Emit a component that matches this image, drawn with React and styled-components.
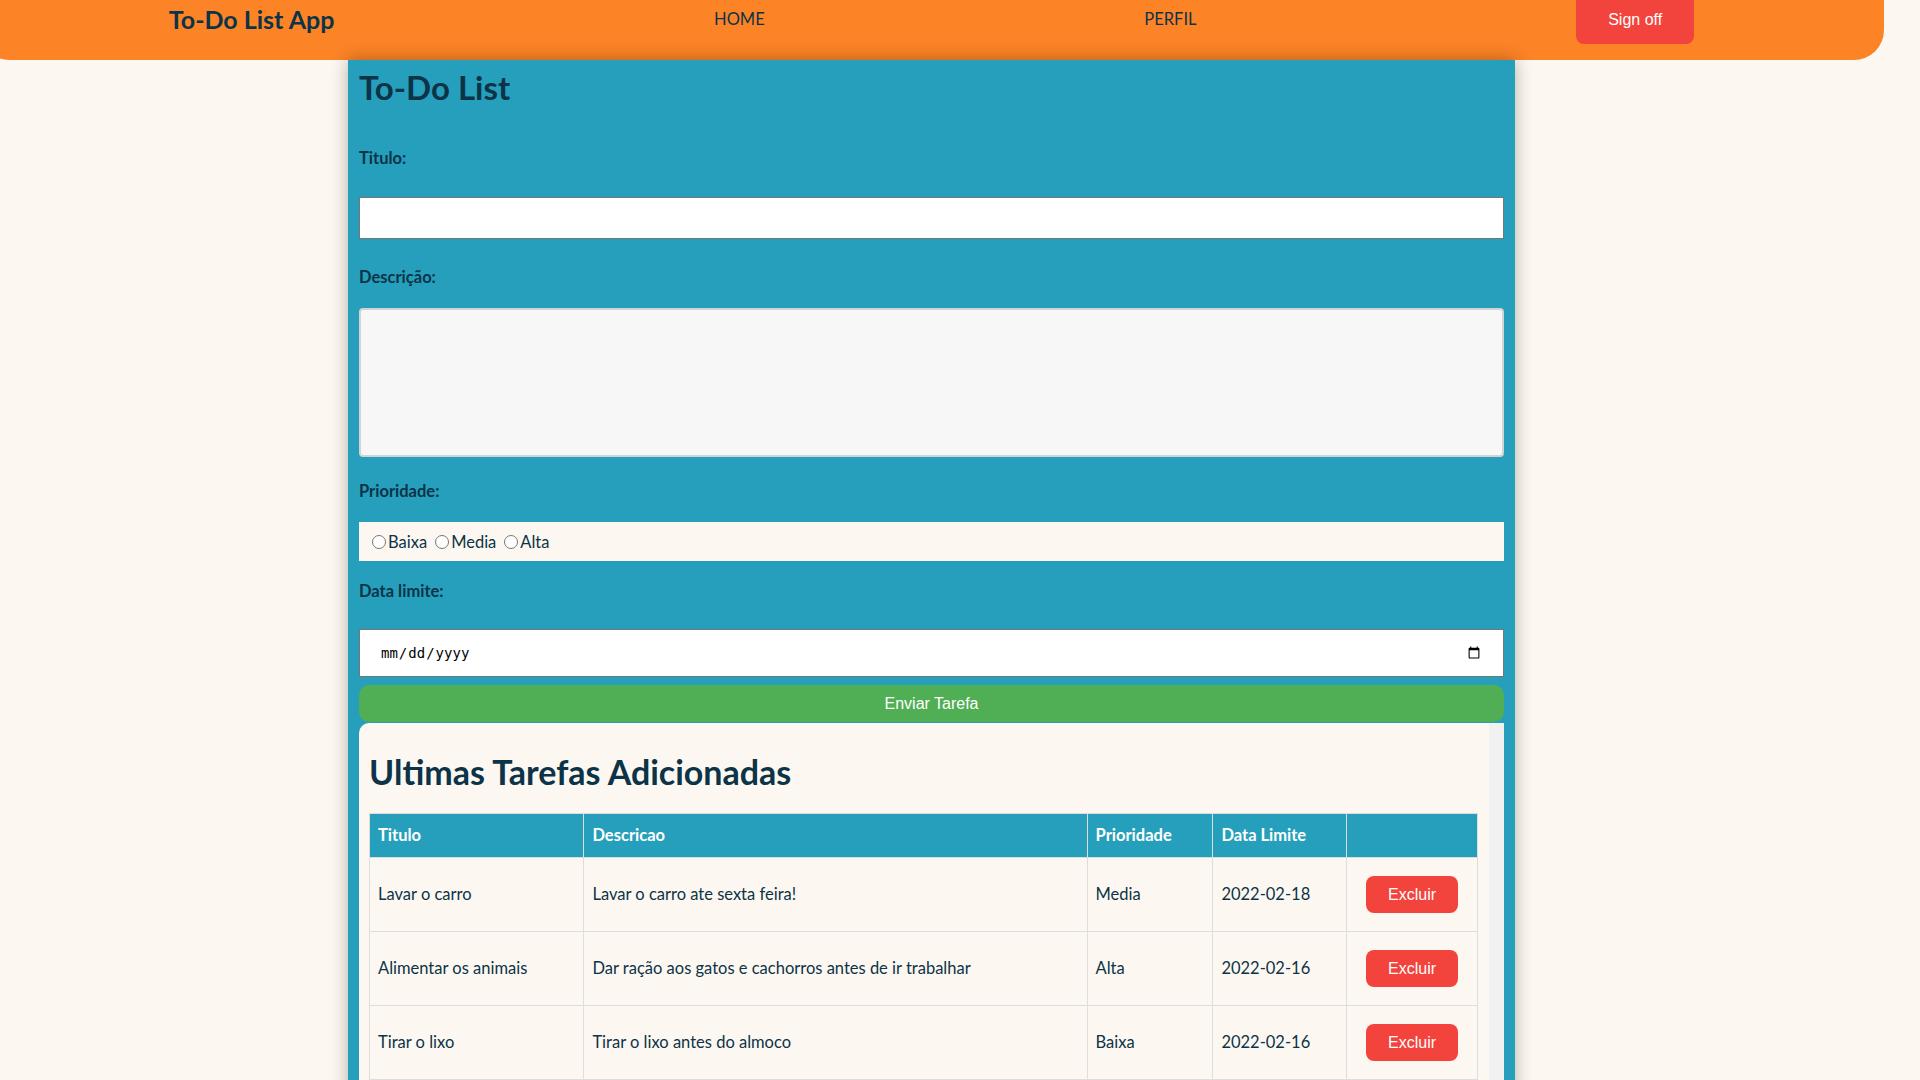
import React, { useLayoutEffect } from 'react';
import styled, { createGlobalStyle } from 'styled-components';

const GlobalStyle = createGlobalStyle`
    html,
    body {
        margin: 0;
        padding: 0;
    }

    body {
        background-color: #fcf8f1;
        font-family: Lato, 'Noto Sans', sans-serif;
        color: #0c3347;
    }

    * {
        box-sizing: border-box;
    }
`;

const Page = styled.div`
    box-sizing: content-box;
    width: 1905px;
    margin-left: -21px;
    padding-right: 44px;
`;

const Header = styled.nav`
    display: flex;
    justify-content: space-around;
    align-items: center;
    height: 112px;
    padding-top: 30px;
    background-color: #fc8326;
    border-radius: 0 0 30px 30px;
`;

const Logo = styled.span`
    font-size: 25px;
    font-weight: 700;
    line-height: 29px;
`;

const NavLink = styled.a`
    font-size: 16.5px;
    color: #0c3347;
    text-decoration: none;
`;

const SignOff = styled.button`
    width: 118px;
    height: 50px;
    padding-top: 3px;
    border: none;
    border-radius: 8px;
    background-color: #f3433d;
    color: #fff;
    font-family: 'Liberation Sans', Arial, sans-serif;
    font-size: 16px;
`;

const Panel = styled.main`
    width: 1167px;
    margin: 0 auto;
    padding: 7px 11px 10px;
    background-color: #259fbb;
    box-shadow: 0 0 16px rgba(0, 0, 0, 0.3);
`;

const Title = styled.h1`
    margin: 0;
    font-size: 33px;
    line-height: 40px;
    font-weight: 700;
`;

const Label = styled.label`
    display: block;
    margin-top: ${(p) => p.$gap}px;
    font-size: 16.5px;
    line-height: 20px;
    font-weight: 700;
`;

const TextInput = styled.input`
    display: block;
    width: 100%;
    height: 42px;
    margin-top: 29px;
    border: 1px solid #767676;
    background-color: #fff;
    padding: 0 10px;
    font-size: 16px;
`;

const TextArea = styled.textarea`
    display: block;
    width: 100%;
    height: 149px;
    margin-top: 21px;
    border: 2px solid #d3d3d3;
    border-radius: 4px;
    background-color: #f7f7f7;
    resize: none;
`;

const RadioBox = styled.div`
    display: flex;
    align-items: center;
    gap: 3px;
    height: 39px;
    margin-top: 21px;
    padding-left: 8px;
    background-color: #fcf8f1;
    font-size: 16.5px;

    label {
        display: flex;
        align-items: center;
    }

    input {
        margin: 0 2px 0 5px;
        width: 14px;
        height: 14px;
    }
`;

const DateInput = styled.input`
    display: block;
    width: 100%;
    height: 48px;
    margin-top: 28px;
    padding: 0 20px;
    border: 1px solid #767676;
    background-color: #fff;
    font-family: 'DejaVu Sans Mono', monospace;
    font-size: 14px;
    color: #000;
`;

const SubmitButton = styled.button`
    display: block;
    width: 100%;
    height: 37px;
    margin-top: 8px;
    border: none;
    border-radius: 10px;
    background-color: #50ae55;
    color: #fff;
    font-family: 'Liberation Sans', Arial, sans-serif;
    font-size: 16px;
`;

/* the grey strip on the right stands for the box's scroll track */
const ListBox = styled.section`
    height: 564px;
    margin-top: 1px;
    padding: 0 11px 0 10px;
    background-color: #fcf8f1;
    border-right: 15px solid #f1f1f1;
    border-top-left-radius: 10px;
    overflow-y: auto;
`;

const ListTitle = styled.h2`
    margin: 29px 0 0;
    font-size: 34px;
    line-height: 40px;
    font-weight: 700;
`;

const Table = styled.table`
    width: 100%;
    margin-top: 21px;
    border-collapse: collapse;
    font-size: 16.5px;
    line-height: 19px;
`;

const Th = styled.th`
    width: ${(p) => p.$w}px;
    padding: 12px 8px;
    border: 1px solid #ddd;
    background-color: #259fbb;
    color: #fff;
    font-weight: 700;
    text-align: left;
`;

const Td = styled.td`
    padding: 8px;
    border: 1px solid #ddd;
    text-align: ${(p) => (p.$center ? 'center' : 'left')};
    vertical-align: middle;
`;

const DeleteButton = styled.button`
    height: 37px;
    margin: 10px 0;
    padding: 0 22px;
    border: none;
    border-radius: 8px;
    background-color: #f3433d;
    color: #fff;
    font-family: 'Liberation Sans', Arial, sans-serif;
    font-size: 16px;
`;

const tasks = [
    {
        titulo: 'Lavar o carro',
        descricao: 'Lavar o carro ate sexta feira!',
        prioridade: 'Media',
        data: '2022-02-18',
    },
    {
        titulo: 'Alimentar os animais',
        descricao: 'Dar ração aos gatos e cachorros antes de ir trabalhar',
        prioridade: 'Alta',
        data: '2022-02-16',
    },
    {
        titulo: 'Tirar o lixo',
        descricao: 'Tirar o lixo antes do almoco',
        prioridade: 'Baixa',
        data: '2022-02-16',
    },
];

export default function App() {
    // the page is shown scrolled a little way down
    useLayoutEffect(() => {
        window.scrollTo(0, 52);
    }, []);

    return (
        <Page>
            <GlobalStyle />
            <Header>
                <Logo>To-Do List App</Logo>
                <NavLink href="#">HOME</NavLink>
                <NavLink href="#">PERFIL</NavLink>
                <SignOff>Sign off</SignOff>
            </Header>
            <Panel>
                <Title>To-Do List</Title>
                <Label $gap={41}>Titulo:</Label>
                <TextInput type="text" />
                <Label $gap={28}>Descrição:</Label>
                <TextArea />
                <Label $gap={24}>Prioridade:</Label>
                <RadioBox>
                    <label>
                        <input type="radio" name="prioridade" />
                        Baixa
                    </label>
                    <label>
                        <input type="radio" name="prioridade" />
                        Media
                    </label>
                    <label>
                        <input type="radio" name="prioridade" />
                        Alta
                    </label>
                </RadioBox>
                <Label $gap={20}>Data limite:</Label>
                <DateInput type="date" />
                <SubmitButton>Enviar Tarefa</SubmitButton>
                <ListBox>
                    <ListTitle>Ultimas Tarefas Adicionadas</ListTitle>
                    <Table>
                        <thead>
                            <tr>
                                <Th $w={215}>Titulo</Th>
                                <Th $w={505}>Descricao</Th>
                                <Th $w={126}>Prioridade</Th>
                                <Th $w={134}>Data Limite</Th>
                                <Th $w={131}></Th>
                            </tr>
                        </thead>
                        <tbody>
                            {tasks.map((task) => (
                                <tr key={task.titulo}>
                                    <Td>{task.titulo}</Td>
                                    <Td>{task.descricao}</Td>
                                    <Td>{task.prioridade}</Td>
                                    <Td>{task.data}</Td>
                                    <Td $center>
                                        <DeleteButton>Excluir</DeleteButton>
                                    </Td>
                                </tr>
                            ))}
                        </tbody>
                    </Table>
                </ListBox>
            </Panel>
        </Page>
    );
}
